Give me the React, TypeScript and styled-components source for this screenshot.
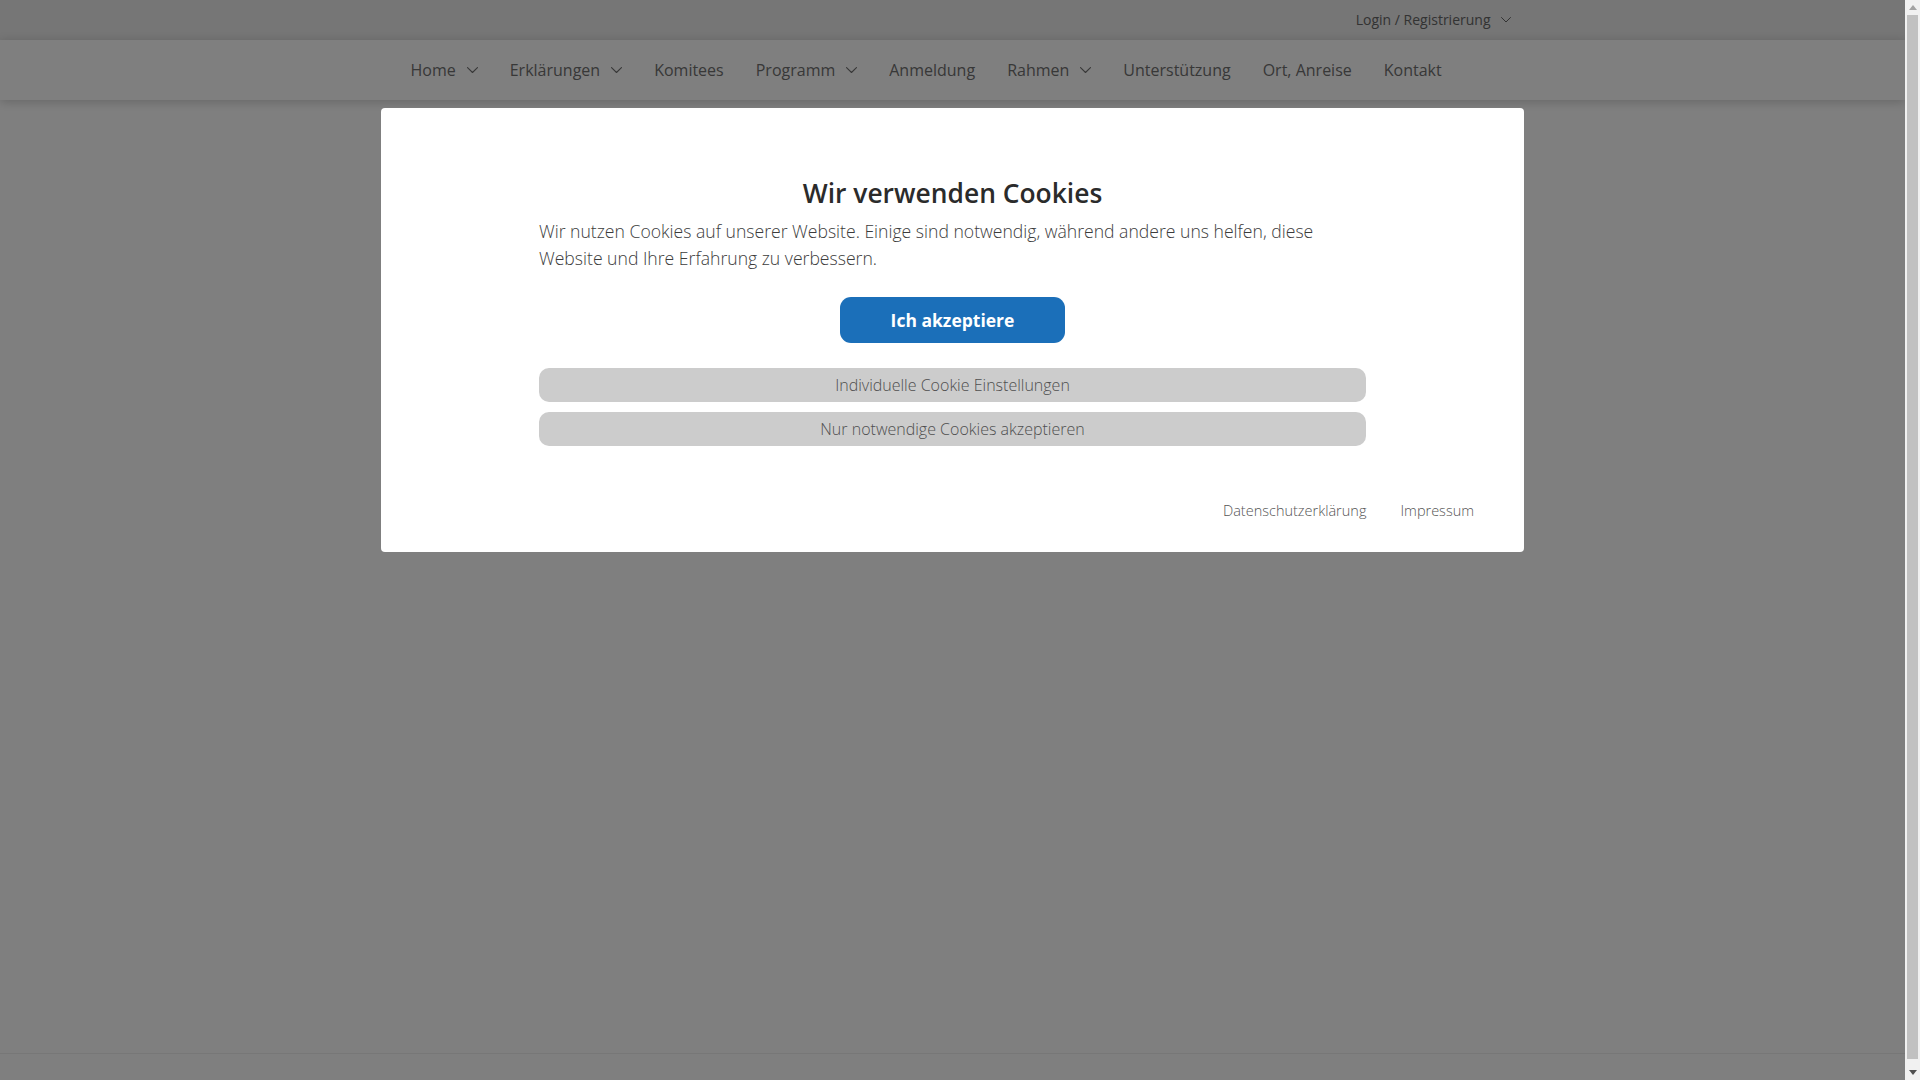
import * as React from "react";
import styled, { createGlobalStyle } from "styled-components";

const GlobalStyle = createGlobalStyle`
  html, body {
    margin: 0;
    padding: 0;
    background: #ffffff;
    font-family: "Open Sans", "Liberation Sans", sans-serif;
    overflow: hidden;
  }
  * {
    box-sizing: border-box;
  }
`;

const Window = styled("div")`
  display: flex;
  height: 100vh;
`;

const Viewport = styled("div")`
  flex: 1;
  position: relative;
  overflow: hidden;
`;

const Page = styled("div")`
  min-height: 1100px;
  display: flex;
  flex-direction: column;
`;

const Scrollbar = styled("div")`
  width: 15px;
  background: #f1f1f1;
  display: flex;
  flex-direction: column;
  align-items: center;
`;

const ScrollArrow = styled("div")<{ $down?: boolean }>`
  height: 15px;
  width: 15px;
  display: flex;
  align-items: center;
  justify-content: center;
  color: ${(p) => (p.$down ? "#505050" : "#a3a3a3")};
`;

const ScrollThumb = styled("div")`
  flex: 1;
  width: 11px;
  margin-bottom: 6px;
  background: #c1c1c1;
`;

const TopBar = styled("div")`
  height: 40px;
  background: #ececec;
`;

const Container = styled("div")`
  width: 1140px;
  margin: 0 auto;
  padding: 0 15px;
  height: 100%;
  display: flex;
  align-items: center;
`;

const TopBarInner = styled(Container)`
  justify-content: flex-end;
  padding-right: 12px;
`;

const LoginLink = styled("a")`
  display: flex;
  align-items: center;
  gap: 10px;
  margin-bottom: 1px;
  font-size: 14px;
  color: #666666;
  text-decoration: none;
  cursor: pointer;
`;

const NavBar = styled("nav")`
  height: 60px;
  background: #ffffff;
  box-shadow: 0 2px 10px rgba(0, 0, 0, 0.2);
  position: relative;
  z-index: 1;
`;

const NavList = styled(Container)`
  padding-left: 28px;
`;

const NavItem = styled("a")`
  display: flex;
  align-items: center;
  gap: 11px;
  padding: 0 16px;
  font-size: 16px;
  color: #707070;
  text-decoration: none;
  cursor: pointer;
  &:first-child {
    padding-left: 0;
  }
`;

const Main = styled("main")`
  flex: 1;
`;

const Footer = styled("footer")`
  height: 47px;
  border-top: 1px solid #eeeeee;
`;

const Overlay = styled("div")`
  position: absolute;
  inset: 0;
  background: rgba(0, 0, 0, 0.5);
  display: flex;
  justify-content: center;
  align-items: flex-start;
  padding-top: 108px;
  z-index: 10;
`;

const Modal = styled("div")`
  width: 1143px;
  background: #ffffff;
  border-radius: 4px;
  padding: 68px 158px 31px;
  display: flex;
  flex-direction: column;
`;

const Title = styled("h2")`
  margin: 0 0 8px;
  text-align: center;
  font-size: 26.4px;
  font-weight: 600;
  line-height: 34px;
  color: #2b2b2b;
`;

const Text = styled("p")`
  margin: 0;
  font-size: 17.6px;
  font-weight: 300;
  line-height: 27px;
  color: #3c3c3c;
`;

const AcceptButton = styled("button")`
  align-self: center;
  margin-top: 25px;
  width: 225px;
  height: 46px;
  border: none;
  border-radius: 11px;
  background: #1b6fb9;
  color: #ffffff;
  font-family: inherit;
  font-size: 17.5px;
  font-weight: 700;
  cursor: pointer;
`;

const ButtonStack = styled("div")`
  margin-top: 25px;
  display: flex;
  flex-direction: column;
  gap: 10px;
`;

const GreyButton = styled("button")`
  height: 34px;
  width: 100%;
  border: none;
  border-radius: 10px;
  background: #cccccc;
  color: #4f4f4f;
  font-family: inherit;
  font-size: 16px;
  font-weight: 300;
  cursor: pointer;
`;

const LinkRow = styled("div")`
  margin: 55px -108px 0 0;
  display: flex;
  justify-content: flex-end;
  gap: 34px;
  line-height: 20px;
`;

const FooterLink = styled("a")`
  font-size: 14.5px;
  font-weight: 300;
  color: #555555;
  text-decoration: none;
  cursor: pointer;
`;

const Chevron = ({ size = 11 }: { size?: number }) => (
  <svg width={size} height={size * 0.6} viewBox="0 0 10 6" fill="none">
    <polyline
      points="0.5,0.5 5,5 9.5,0.5"
      stroke="currentColor"
      strokeWidth="1"
      strokeLinecap="round"
      strokeLinejoin="round"
    />
  </svg>
);

const Triangle = ({ down }: { down?: boolean }) => (
  <svg width="8" height="5" viewBox="0 0 8 5">
    <polygon
      points={down ? "0,0 8,0 4,5" : "0,5 8,5 4,0"}
      fill="currentColor"
    />
  </svg>
);

const navItems: { label: string; sub?: boolean }[] = [
  { label: "Home", sub: true },
  { label: "Erklärungen", sub: true },
  { label: "Komitees" },
  { label: "Programm", sub: true },
  { label: "Anmeldung" },
  { label: "Rahmen", sub: true },
  { label: "Unterstützung" },
  { label: "Ort, Anreise" },
  { label: "Kontakt" },
];

function App(): JSX.Element {
  return (
    <>
      <GlobalStyle />
      <Window>
        <Viewport>
          <Page>
            <TopBar>
              <TopBarInner>
                <LoginLink>
                  Login / Registrierung
                  <Chevron size={10} />
                </LoginLink>
              </TopBarInner>
            </TopBar>
            <NavBar>
              <NavList>
                {navItems.map((item) => (
                  <NavItem key={item.label}>
                    {item.label}
                    {item.sub && <Chevron />}
                  </NavItem>
                ))}
              </NavList>
            </NavBar>
            <Main />
            <Footer />
          </Page>
          <Overlay>
            <Modal>
              <Title>Wir verwenden Cookies</Title>
              <Text>
                Wir nutzen Cookies auf unserer Website. Einige sind notwendig,
                während andere uns helfen, diese Website und Ihre Erfahrung zu
                verbessern.
              </Text>
              <AcceptButton>Ich akzeptiere</AcceptButton>
              <ButtonStack>
                <GreyButton>Individuelle Cookie Einstellungen</GreyButton>
                <GreyButton>Nur notwendige Cookies akzeptieren</GreyButton>
              </ButtonStack>
              <LinkRow>
                <FooterLink>Datenschutzerklärung</FooterLink>
                <FooterLink>Impressum</FooterLink>
              </LinkRow>
            </Modal>
          </Overlay>
        </Viewport>
        <Scrollbar>
          <ScrollArrow>
            <Triangle />
          </ScrollArrow>
          <ScrollThumb />
          <ScrollArrow $down>
            <Triangle down />
          </ScrollArrow>
        </Scrollbar>
      </Window>
    </>
  );
}

export default App;
